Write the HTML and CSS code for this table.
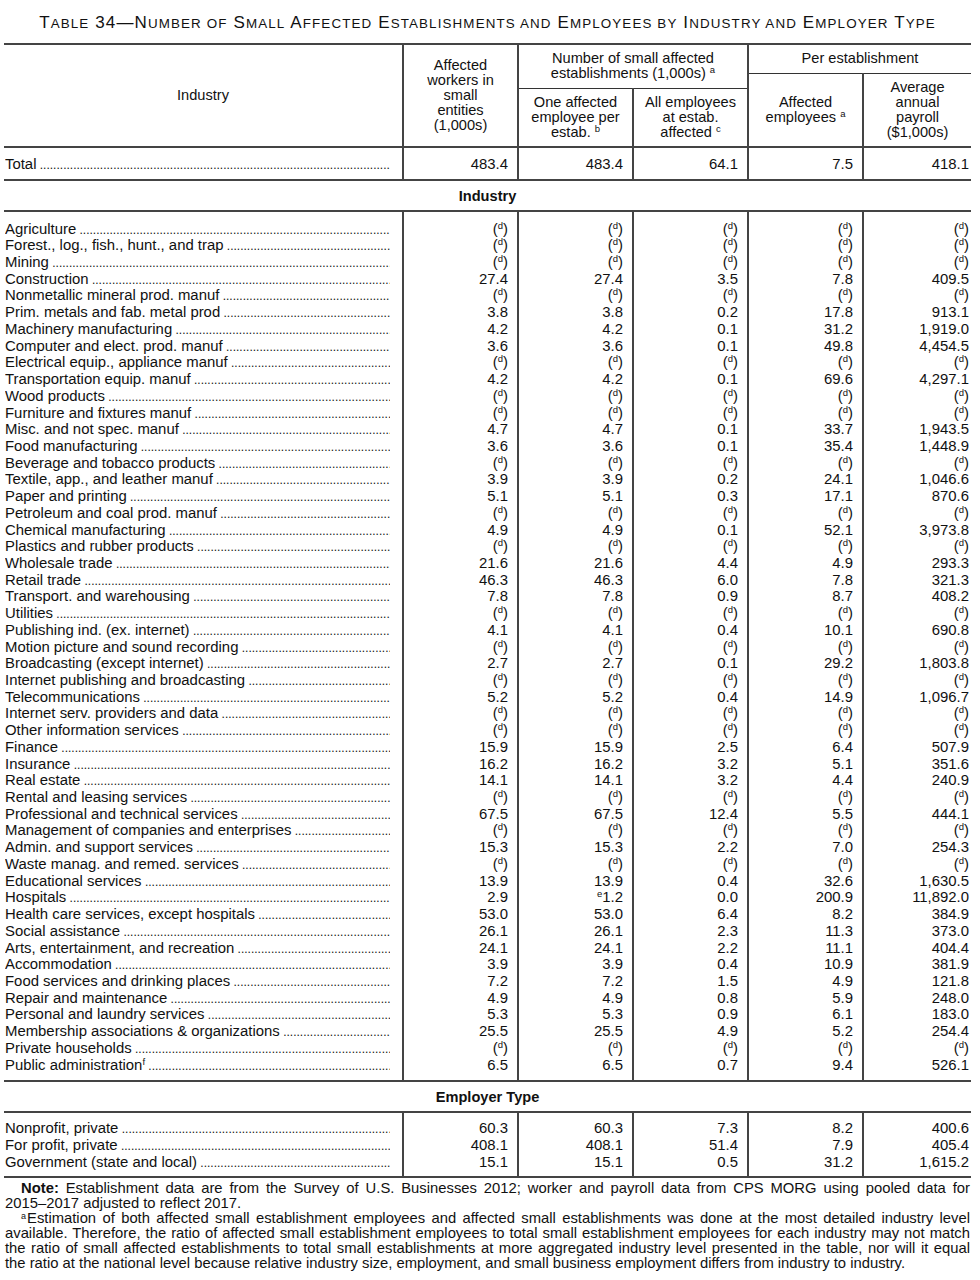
FILE: index.html
```html
<!DOCTYPE html>
<html lang="en">
<head>
<meta charset="utf-8">
<title>Table 34</title>
<link rel="stylesheet" href="styles.css">
</head>
<body>
<div class="page">
<h1 class="title">T<span class="sc">able</span> 34—N<span class="sc">umber of</span> S<span class="sc">mall</span> A<span class="sc">ffected</span> E<span class="sc">stablishments and</span> E<span class="sc">mployees by</span> I<span class="sc">ndustry and</span> E<span class="sc">mployer</span> T<span class="sc">ype</span></h1>
<table class="t34">
<colgroup>
<col class="c-ind"><col class="c-num"><col class="c-num"><col class="c-num"><col class="c-num"><col class="c-last">
</colgroup>
<thead>
<tr class="h1">
<th rowspan="3" class="hi">Industry</th>
<th rowspan="3">Affected<br>workers in<br>small<br>entities<br>(1,000s)</th>
<th colspan="2" rowspan="2" class="hsub">Number of small affected<br>establishments (1,000s) <sup>a</sup></th>
<th colspan="2" class="hsub">Per establishment</th>
</tr>
<tr class="h2">
<th rowspan="2">Affected<br>employees <sup>a</sup></th>
<th rowspan="2">Average<br>annual<br>payroll<br>($1,000s)</th>
</tr>
<tr class="h3">
<th>One affected<br>employee per<br>estab. <sup>b</sup></th>
<th>All employees<br>at estab.<br>affected <sup>c</sup></th>
</tr>
</thead>
<tbody class="total">
<tr><td class="lab"><div class="lead">Total</div></td><td class="n">483.4</td><td class="n">483.4</td><td class="n">64.1</td><td class="n">7.5</td><td class="n">418.1</td></tr>
</tbody>
<tbody class="section">
<tr><th colspan="6">Industry</th></tr>
</tbody>
<tbody class="rows">
<tr><td class="lab"><div class="lead">Agriculture</div></td><td class="n">(<sup>d</sup>)</td><td class="n">(<sup>d</sup>)</td><td class="n">(<sup>d</sup>)</td><td class="n">(<sup>d</sup>)</td><td class="n">(<sup>d</sup>)</td></tr>
<tr><td class="lab"><div class="lead">Forest., log., fish., hunt., and trap</div></td><td class="n">(<sup>d</sup>)</td><td class="n">(<sup>d</sup>)</td><td class="n">(<sup>d</sup>)</td><td class="n">(<sup>d</sup>)</td><td class="n">(<sup>d</sup>)</td></tr>
<tr><td class="lab"><div class="lead">Mining</div></td><td class="n">(<sup>d</sup>)</td><td class="n">(<sup>d</sup>)</td><td class="n">(<sup>d</sup>)</td><td class="n">(<sup>d</sup>)</td><td class="n">(<sup>d</sup>)</td></tr>
<tr><td class="lab"><div class="lead">Construction</div></td><td class="n">27.4</td><td class="n">27.4</td><td class="n">3.5</td><td class="n">7.8</td><td class="n">409.5</td></tr>
<tr><td class="lab"><div class="lead">Nonmetallic mineral prod. manuf</div></td><td class="n">(<sup>d</sup>)</td><td class="n">(<sup>d</sup>)</td><td class="n">(<sup>d</sup>)</td><td class="n">(<sup>d</sup>)</td><td class="n">(<sup>d</sup>)</td></tr>
<tr><td class="lab"><div class="lead">Prim. metals and fab. metal prod</div></td><td class="n">3.8</td><td class="n">3.8</td><td class="n">0.2</td><td class="n">17.8</td><td class="n">913.1</td></tr>
<tr><td class="lab"><div class="lead">Machinery manufacturing</div></td><td class="n">4.2</td><td class="n">4.2</td><td class="n">0.1</td><td class="n">31.2</td><td class="n">1,919.0</td></tr>
<tr><td class="lab"><div class="lead">Computer and elect. prod. manuf</div></td><td class="n">3.6</td><td class="n">3.6</td><td class="n">0.1</td><td class="n">49.8</td><td class="n">4,454.5</td></tr>
<tr><td class="lab"><div class="lead">Electrical equip., appliance manuf</div></td><td class="n">(<sup>d</sup>)</td><td class="n">(<sup>d</sup>)</td><td class="n">(<sup>d</sup>)</td><td class="n">(<sup>d</sup>)</td><td class="n">(<sup>d</sup>)</td></tr>
<tr><td class="lab"><div class="lead">Transportation equip. manuf</div></td><td class="n">4.2</td><td class="n">4.2</td><td class="n">0.1</td><td class="n">69.6</td><td class="n">4,297.1</td></tr>
<tr><td class="lab"><div class="lead">Wood products</div></td><td class="n">(<sup>d</sup>)</td><td class="n">(<sup>d</sup>)</td><td class="n">(<sup>d</sup>)</td><td class="n">(<sup>d</sup>)</td><td class="n">(<sup>d</sup>)</td></tr>
<tr><td class="lab"><div class="lead">Furniture and fixtures manuf</div></td><td class="n">(<sup>d</sup>)</td><td class="n">(<sup>d</sup>)</td><td class="n">(<sup>d</sup>)</td><td class="n">(<sup>d</sup>)</td><td class="n">(<sup>d</sup>)</td></tr>
<tr><td class="lab"><div class="lead">Misc. and not spec. manuf</div></td><td class="n">4.7</td><td class="n">4.7</td><td class="n">0.1</td><td class="n">33.7</td><td class="n">1,943.5</td></tr>
<tr><td class="lab"><div class="lead">Food manufacturing</div></td><td class="n">3.6</td><td class="n">3.6</td><td class="n">0.1</td><td class="n">35.4</td><td class="n">1,448.9</td></tr>
<tr><td class="lab"><div class="lead">Beverage and tobacco products</div></td><td class="n">(<sup>d</sup>)</td><td class="n">(<sup>d</sup>)</td><td class="n">(<sup>d</sup>)</td><td class="n">(<sup>d</sup>)</td><td class="n">(<sup>d</sup>)</td></tr>
<tr><td class="lab"><div class="lead">Textile, app., and leather manuf</div></td><td class="n">3.9</td><td class="n">3.9</td><td class="n">0.2</td><td class="n">24.1</td><td class="n">1,046.6</td></tr>
<tr><td class="lab"><div class="lead">Paper and printing</div></td><td class="n">5.1</td><td class="n">5.1</td><td class="n">0.3</td><td class="n">17.1</td><td class="n">870.6</td></tr>
<tr><td class="lab"><div class="lead">Petroleum and coal prod. manuf</div></td><td class="n">(<sup>d</sup>)</td><td class="n">(<sup>d</sup>)</td><td class="n">(<sup>d</sup>)</td><td class="n">(<sup>d</sup>)</td><td class="n">(<sup>d</sup>)</td></tr>
<tr><td class="lab"><div class="lead">Chemical manufacturing</div></td><td class="n">4.9</td><td class="n">4.9</td><td class="n">0.1</td><td class="n">52.1</td><td class="n">3,973.8</td></tr>
<tr><td class="lab"><div class="lead">Plastics and rubber products</div></td><td class="n">(<sup>d</sup>)</td><td class="n">(<sup>d</sup>)</td><td class="n">(<sup>d</sup>)</td><td class="n">(<sup>d</sup>)</td><td class="n">(<sup>d</sup>)</td></tr>
<tr><td class="lab"><div class="lead">Wholesale trade</div></td><td class="n">21.6</td><td class="n">21.6</td><td class="n">4.4</td><td class="n">4.9</td><td class="n">293.3</td></tr>
<tr><td class="lab"><div class="lead">Retail trade</div></td><td class="n">46.3</td><td class="n">46.3</td><td class="n">6.0</td><td class="n">7.8</td><td class="n">321.3</td></tr>
<tr><td class="lab"><div class="lead">Transport. and warehousing</div></td><td class="n">7.8</td><td class="n">7.8</td><td class="n">0.9</td><td class="n">8.7</td><td class="n">408.2</td></tr>
<tr><td class="lab"><div class="lead">Utilities</div></td><td class="n">(<sup>d</sup>)</td><td class="n">(<sup>d</sup>)</td><td class="n">(<sup>d</sup>)</td><td class="n">(<sup>d</sup>)</td><td class="n">(<sup>d</sup>)</td></tr>
<tr><td class="lab"><div class="lead">Publishing ind. (ex. internet)</div></td><td class="n">4.1</td><td class="n">4.1</td><td class="n">0.4</td><td class="n">10.1</td><td class="n">690.8</td></tr>
<tr><td class="lab"><div class="lead">Motion picture and sound recording</div></td><td class="n">(<sup>d</sup>)</td><td class="n">(<sup>d</sup>)</td><td class="n">(<sup>d</sup>)</td><td class="n">(<sup>d</sup>)</td><td class="n">(<sup>d</sup>)</td></tr>
<tr><td class="lab"><div class="lead">Broadcasting (except internet)</div></td><td class="n">2.7</td><td class="n">2.7</td><td class="n">0.1</td><td class="n">29.2</td><td class="n">1,803.8</td></tr>
<tr><td class="lab"><div class="lead">Internet publishing and broadcasting</div></td><td class="n">(<sup>d</sup>)</td><td class="n">(<sup>d</sup>)</td><td class="n">(<sup>d</sup>)</td><td class="n">(<sup>d</sup>)</td><td class="n">(<sup>d</sup>)</td></tr>
<tr><td class="lab"><div class="lead">Telecommunications</div></td><td class="n">5.2</td><td class="n">5.2</td><td class="n">0.4</td><td class="n">14.9</td><td class="n">1,096.7</td></tr>
<tr><td class="lab"><div class="lead">Internet serv. providers and data</div></td><td class="n">(<sup>d</sup>)</td><td class="n">(<sup>d</sup>)</td><td class="n">(<sup>d</sup>)</td><td class="n">(<sup>d</sup>)</td><td class="n">(<sup>d</sup>)</td></tr>
<tr><td class="lab"><div class="lead">Other information services</div></td><td class="n">(<sup>d</sup>)</td><td class="n">(<sup>d</sup>)</td><td class="n">(<sup>d</sup>)</td><td class="n">(<sup>d</sup>)</td><td class="n">(<sup>d</sup>)</td></tr>
<tr><td class="lab"><div class="lead">Finance</div></td><td class="n">15.9</td><td class="n">15.9</td><td class="n">2.5</td><td class="n">6.4</td><td class="n">507.9</td></tr>
<tr><td class="lab"><div class="lead">Insurance</div></td><td class="n">16.2</td><td class="n">16.2</td><td class="n">3.2</td><td class="n">5.1</td><td class="n">351.6</td></tr>
<tr><td class="lab"><div class="lead">Real estate</div></td><td class="n">14.1</td><td class="n">14.1</td><td class="n">3.2</td><td class="n">4.4</td><td class="n">240.9</td></tr>
<tr><td class="lab"><div class="lead">Rental and leasing services</div></td><td class="n">(<sup>d</sup>)</td><td class="n">(<sup>d</sup>)</td><td class="n">(<sup>d</sup>)</td><td class="n">(<sup>d</sup>)</td><td class="n">(<sup>d</sup>)</td></tr>
<tr><td class="lab"><div class="lead">Professional and technical services</div></td><td class="n">67.5</td><td class="n">67.5</td><td class="n">12.4</td><td class="n">5.5</td><td class="n">444.1</td></tr>
<tr><td class="lab"><div class="lead">Management of companies and enterprises</div></td><td class="n">(<sup>d</sup>)</td><td class="n">(<sup>d</sup>)</td><td class="n">(<sup>d</sup>)</td><td class="n">(<sup>d</sup>)</td><td class="n">(<sup>d</sup>)</td></tr>
<tr><td class="lab"><div class="lead">Admin. and support services</div></td><td class="n">15.3</td><td class="n">15.3</td><td class="n">2.2</td><td class="n">7.0</td><td class="n">254.3</td></tr>
<tr><td class="lab"><div class="lead">Waste manag. and remed. services</div></td><td class="n">(<sup>d</sup>)</td><td class="n">(<sup>d</sup>)</td><td class="n">(<sup>d</sup>)</td><td class="n">(<sup>d</sup>)</td><td class="n">(<sup>d</sup>)</td></tr>
<tr><td class="lab"><div class="lead">Educational services</div></td><td class="n">13.9</td><td class="n">13.9</td><td class="n">0.4</td><td class="n">32.6</td><td class="n">1,630.5</td></tr>
<tr><td class="lab"><div class="lead">Hospitals</div></td><td class="n">2.9</td><td class="n"><sup>e</sup>1.2</td><td class="n">0.0</td><td class="n">200.9</td><td class="n">11,892.0</td></tr>
<tr><td class="lab"><div class="lead">Health care services, except hospitals</div></td><td class="n">53.0</td><td class="n">53.0</td><td class="n">6.4</td><td class="n">8.2</td><td class="n">384.9</td></tr>
<tr><td class="lab"><div class="lead">Social assistance</div></td><td class="n">26.1</td><td class="n">26.1</td><td class="n">2.3</td><td class="n">11.3</td><td class="n">373.0</td></tr>
<tr><td class="lab"><div class="lead">Arts, entertainment, and recreation</div></td><td class="n">24.1</td><td class="n">24.1</td><td class="n">2.2</td><td class="n">11.1</td><td class="n">404.4</td></tr>
<tr><td class="lab"><div class="lead">Accommodation</div></td><td class="n">3.9</td><td class="n">3.9</td><td class="n">0.4</td><td class="n">10.9</td><td class="n">381.9</td></tr>
<tr><td class="lab"><div class="lead">Food services and drinking places</div></td><td class="n">7.2</td><td class="n">7.2</td><td class="n">1.5</td><td class="n">4.9</td><td class="n">121.8</td></tr>
<tr><td class="lab"><div class="lead">Repair and maintenance</div></td><td class="n">4.9</td><td class="n">4.9</td><td class="n">0.8</td><td class="n">5.9</td><td class="n">248.0</td></tr>
<tr><td class="lab"><div class="lead">Personal and laundry services</div></td><td class="n">5.3</td><td class="n">5.3</td><td class="n">0.9</td><td class="n">6.1</td><td class="n">183.0</td></tr>
<tr><td class="lab"><div class="lead">Membership associations &amp; organizations</div></td><td class="n">25.5</td><td class="n">25.5</td><td class="n">4.9</td><td class="n">5.2</td><td class="n">254.4</td></tr>
<tr><td class="lab"><div class="lead">Private households</div></td><td class="n">(<sup>d</sup>)</td><td class="n">(<sup>d</sup>)</td><td class="n">(<sup>d</sup>)</td><td class="n">(<sup>d</sup>)</td><td class="n">(<sup>d</sup>)</td></tr>
<tr><td class="lab"><div class="lead">Public administration<sup>f</sup></div></td><td class="n">6.5</td><td class="n">6.5</td><td class="n">0.7</td><td class="n">9.4</td><td class="n">526.1</td></tr>
</tbody>
<tbody class="section">
<tr><th colspan="6">Employer Type</th></tr>
</tbody>
<tbody class="rows emp">
<tr><td class="lab"><div class="lead">Nonprofit, private</div></td><td class="n">60.3</td><td class="n">60.3</td><td class="n">7.3</td><td class="n">8.2</td><td class="n">400.6</td></tr>
<tr><td class="lab"><div class="lead">For profit, private</div></td><td class="n">408.1</td><td class="n">408.1</td><td class="n">51.4</td><td class="n">7.9</td><td class="n">405.4</td></tr>
<tr><td class="lab"><div class="lead">Government (state and local)</div></td><td class="n">15.1</td><td class="n">15.1</td><td class="n">0.5</td><td class="n">31.2</td><td class="n">1,615.2</td></tr>
</tbody>
</table>
<div class="notes">
<p><b>Note:</b> Establishment data are from the Survey of U.S. Businesses 2012; worker and payroll data from CPS MORG using pooled data for <span class="nw">2015–2017</span> adjusted to reflect 2017.</p>
<p><sup>a</sup>Estimation of both affected small establishment employees and affected small establishments was done at the most detailed industry level available. Therefore, the ratio of affected small establishment employees to total small establishment employees for each industry may not match the ratio of small affected establishments to total small establishments at more aggregated industry level presented in the table, nor will it equal <span class="nw">the ratio</span> at the national level because relative industry size, employment, and small business employment differs from industry to industry.</p>
</div>
</div>
</body>
</html>
```

FILE: styles.css
```css
* { box-sizing: border-box; }

body {
  margin: 0;
  background: #fff;
  color: #111;
  font-family: "Liberation Sans", Arial, Helvetica, sans-serif;
}

.page {
  width: 967px;
  margin-left: 4px;
}

.title {
  margin: 0;
  height: 43px;
  padding-top: 13px;
  font-size: 17px;
  line-height: 20px;
  font-weight: normal;
  text-align: center;
  letter-spacing: 1.12px;
  white-space: nowrap;
}

.title .sc {
  font-size: 13.4px;
  text-transform: uppercase;
}

.t34 {
  width: 967px;
  border-collapse: collapse;
  table-layout: fixed;
  border-top: 2px solid #444;
  font-size: 14.9px;
}

.c-ind { width: 399px; }
.c-num { width: 115px; }
.c-last { width: 108px; }

.t34 th,
.t34 td {
  padding: 0;
}

sup {
  font-size: 9.5px;
  line-height: 0;
  vertical-align: 5px;
}

/* header */
.t34 thead {
  border-bottom: 2px solid #444;
}

.t34 thead th {
  font-size: 14.6px;
  font-weight: normal;
  line-height: 15px;
  text-align: center;
  vertical-align: middle;
  border-left: 2px solid #444;
}

.t34 thead th.hi {
  border-left: none;
}

.t34 thead th.hsub {
  border-bottom: 1px solid #333;
}

.h1 { height: 29px; }
.h2 { height: 15px; }
.h3 { height: 59px; }

/* total row */
.total {
  border-bottom: 2px solid #444;
}

.total td {
  height: 33px;
  vertical-align: middle;
}

/* section headings */
.section {
  border-bottom: 2px solid #444;
}

.section th {
  height: 31px;
  font-size: 14.6px;
  font-weight: bold;
  text-align: center;
  vertical-align: middle;
}

/* body rows */
.rows {
  border-bottom: 2px solid #444;
}

.rows td {
  height: 16.72px;
  line-height: 16.72px;
  vertical-align: middle;
}

.rows tr:first-child td { height: auto; padding-top: 8.6px; }
.rows tr:last-child td { height: auto; padding-bottom: 7px; }

.rows.emp td { line-height: 17px; }
.rows.emp tr:first-child td { padding-top: 7px; }
.rows.emp tr:last-child td { padding-bottom: 4.5px; }

.lab {
  padding-left: 1px !important;
}

.lead {
  overflow: hidden;
  white-space: nowrap;
  margin-right: 12px;
}

.lead::after {
  content: " ..............................................................................................................................................";
  font-size: 12px;
  line-height: 0;
}

.n {
  text-align: right;
  padding-right: 9px !important;
  border-left: 2px solid #444;
}

.n:last-child {
  padding-right: 2px !important;
}

/* notes */
.notes {
  margin-top: 3px;
  padding: 0 1px;
  font-size: 14.8px;
  line-height: 15px;
  text-align: justify;
}

.notes p {
  margin: 0;
  text-indent: 16px;
}

.notes sup {
  font-size: 9px;
  vertical-align: 4px;
  margin-right: 1px;
}

.nw {
  white-space: nowrap;
}
```
